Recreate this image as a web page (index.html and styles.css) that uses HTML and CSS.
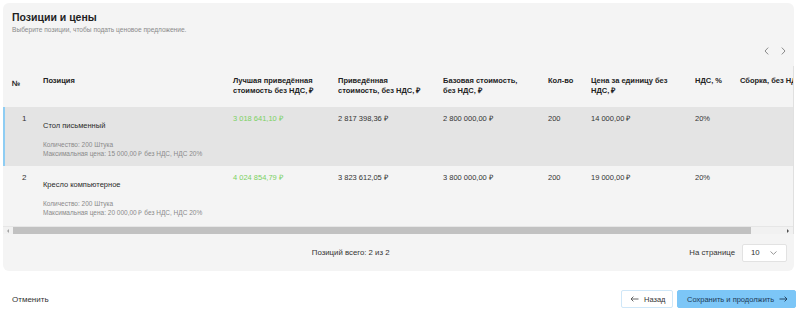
FILE: index.html
```html
<!DOCTYPE html>
<html lang="ru">

<head>
    <meta charset="UTF-8">
    <meta name="viewport" content="width=device-width, initial-scale=1.0">
    <title>Позиции и цены</title>
    <link rel="stylesheet" href="styles.css">
</head>

<body>
    <div class="card">
        <div class="card-head">
            <h2 class="title">Позиции и цены</h2>
            <p class="subtitle">Выберите позиции, чтобы подать ценовое предложение.</p>
        </div>
        <div class="nav-row">
            <button class="nav-btn" aria-label="Назад">
                <svg width="5" height="8" viewBox="0 0 5 8"><path d="M4.2 0.6 L1 4 L4.2 7.4" fill="none" stroke="#8a8a8a" stroke-width="1"/></svg>
            </button>
            <button class="nav-btn" aria-label="Вперёд">
                <svg width="5" height="8" viewBox="0 0 5 8"><path d="M0.8 0.6 L4 4 L0.8 7.4" fill="none" stroke="#8a8a8a" stroke-width="1"/></svg>
            </button>
        </div>
        <div class="table-wrap">
            <table class="positions">
                <colgroup>
                    <col style="width:31px">
                    <col style="width:190px">
                    <col style="width:105px">
                    <col style="width:105px">
                    <col style="width:105px">
                    <col style="width:43px">
                    <col style="width:104px">
                    <col style="width:45px">
                    <col style="width:120px">
                </colgroup>
                <thead>
                    <tr>
                        <th class="num-head">№</th>
                        <th>Позиция</th>
                        <th>Лучшая приведённая стоимость без НДС, ₽</th>
                        <th>Приведённая стоимость, без НДС, ₽</th>
                        <th>Базовая стоимость, без НДС, ₽</th>
                        <th class="nowrap">Кол-во</th>
                        <th>Цена за единицу без НДС, ₽</th>
                        <th class="nowrap">НДС, %</th>
                        <th class="nowrap">Сборка, без НДС, ₽</th>
                    </tr>
                </thead>
                <tbody>
                    <tr class="active">
                        <td class="num">1</td>
                        <td>
                            <div class="pos-name">Стол письменный</div>
                            <div class="pos-info">Количество: 200 Штука<br>Максимальная цена: 15 000,00 ₽ без НДС, НДС 20%</div>
                        </td>
                        <td class="best">3 018 641,10 ₽</td>
                        <td>2 817 398,36 ₽</td>
                        <td>2 800 000,00 ₽</td>
                        <td>200</td>
                        <td>14 000,00 ₽</td>
                        <td>20%</td>
                        <td></td>
                    </tr>
                    <tr>
                        <td class="num">2</td>
                        <td>
                            <div class="pos-name">Кресло компьютерное</div>
                            <div class="pos-info">Количество: 200 Штука<br>Максимальная цена: 20 000,00 ₽ без НДС, НДС 20%</div>
                        </td>
                        <td class="best">4 024 854,79 ₽</td>
                        <td>3 823 612,05 ₽</td>
                        <td>3 800 000,00 ₽</td>
                        <td>200</td>
                        <td>19 000,00 ₽</td>
                        <td>20%</td>
                        <td></td>
                    </tr>
                </tbody>
            </table>
            <div class="hscroll">
                <span class="sb-arrow left"></span>
                <span class="sb-thumb"></span>
                <span class="sb-track"></span>
                <span class="sb-arrow right"></span>
            </div>
        </div>
        <div class="card-foot">
            <div></div>
            <div class="total">Позиций всего: 2 из 2</div>
            <div class="per-page">
                <span>На странице</span>
                <div class="select">
                    <span>10</span>
                    <svg width="7" height="4" viewBox="0 0 7 4"><path d="M0.5 0.5 L3.5 3.3 L6.5 0.5" fill="none" stroke="#8a8a8a" stroke-width="0.9"/></svg>
                </div>
            </div>
        </div>
    </div>

    <div class="actions">
        <button class="link-btn">Отменить</button>
        <div class="actions-right">
            <button class="btn btn-back">
                <svg width="9" height="6" viewBox="0 0 9 6"><path d="M8.5 3 H1 M3.4 0.6 L1 3 L3.4 5.4" fill="none" stroke="#555" stroke-width="0.9"/></svg>
                Назад
            </button>
            <button class="btn btn-save">
                Сохранить и продолжить
                <svg width="9" height="6" viewBox="0 0 9 6"><path d="M0.5 3 H8 M5.6 0.6 L8 3 L5.6 5.4" fill="none" stroke="#1d3b57" stroke-width="0.9"/></svg>
            </button>
        </div>
    </div>
</body>

</html>
```

FILE: styles.css
```css
*{
    box-sizing: border-box;
}
body{
    margin:0;
    padding:3px;
    background:#fff;
    font-family:"Liberation Sans", Arial, sans-serif;
    color:#333;
}
button{
    font-family:inherit;
    cursor:pointer;
}
.card{
    width:791px;
    height:268px;
    background:#f4f4f4;
    border-radius:6px;
    overflow:hidden;
}
.card-head{
    padding:7px 9px 0;
}
.title{
    margin:0;
    font-size:10.5px;
    line-height:14px;
    font-weight:700;
    color:#1f1f1f;
}
.subtitle{
    margin:1px 0 0;
    font-size:6.6px;
    line-height:10px;
    color:#8a8a8a;
}
.nav-row{
    height:31px;
    display:flex;
    justify-content:flex-end;
    align-items:center;
    gap:5px;
    padding-right:5px;
}
.nav-btn{
    width:12px;
    height:12px;
    padding:0;
    border:none;
    background:none;
    display:flex;
    align-items:center;
    justify-content:center;
}
.table-wrap{
    overflow:hidden;
    border-right:1px solid #e0e0e0;
}
.positions{
    table-layout:fixed;
    width:848px;
    border-collapse:collapse;
    font-size:7.5px;
}
.positions th{
    text-align:left;
    vertical-align:top;
    font-size:7.5px;
    line-height:10px;
    font-weight:700;
    color:#222;
    padding:10px 8px 11px 9px;
}
.positions th.num-head{
    padding-top:13px;
}
.positions th.nowrap{
    white-space:nowrap;
    overflow:hidden;
}
.positions td{
    vertical-align:top;
    line-height:10px;
    padding:7px 9px 8px;
    color:#333;
}
.positions td.num{
    padding-left:19px;
    font-size:8px;
}
.positions tbody tr.active{
    background:#e4e4e4;
}
.positions tbody tr.active td:first-child{
    box-shadow:inset 2px 0 #8ecdf3;
}
.positions td.best{
    color:#7bd163;
}
.pos-name{
    margin-top:7px;
    font-size:7.5px;
    color:#2a2a2a;
}
.pos-info{
    margin-top:9px;
    font-size:6.5px;
    line-height:9px;
    color:#8a8a8a;
    white-space:nowrap;
}
.hscroll{
    display:flex;
    height:8px;
    margin-top:1px;
    background:#f1f1f1;
    border-top:1px solid #e6e6e6;
}
.sb-arrow{
    width:10px;
    display:flex;
    align-items:center;
    justify-content:center;
}
.sb-arrow.left::before{
    content:"";
    border-top:2px solid transparent;
    border-bottom:2px solid transparent;
    border-right:2px solid #a3a3a3;
}
.sb-arrow.right::before{
    content:"";
    border-top:2px solid transparent;
    border-bottom:2px solid transparent;
    border-left:2px solid #505050;
}
.sb-thumb{
    width:738px;
    background:#c1c1c1;
}
.sb-track{
    flex:1;
}
.card-foot{
    height:37px;
    display:flex;
    justify-content:space-between;
    align-items:center;
    padding:0 7px 0 9px;
    font-size:7.8px;
    color:#333;
}
.per-page{
    display:flex;
    align-items:center;
    gap:7px;
}
.select{
    width:45px;
    height:18px;
    background:#fff;
    border:1px solid #e2e2e2;
    border-radius:2px;
    display:flex;
    align-items:center;
    justify-content:space-between;
    padding:0 9px 0 8px;
}
.actions{
    margin-top:19px;
    display:flex;
    justify-content:space-between;
    align-items:center;
    padding:0 1px 0 9px;
}
.link-btn{
    border:none;
    background:none;
    padding:0;
    font-size:8px;
    color:#333;
}
.actions-right{
    display:flex;
    gap:4px;
}
.btn{
    height:18px;
    font-size:7.5px;
    border-radius:2px;
    display:flex;
    align-items:center;
    gap:5px;
}
.btn-back{
    width:52px;
    background:#fff;
    border:1px solid #cfe7f8;
    color:#333;
    padding:0 0 0 8px;
}
.btn-save{
    width:119px;
    background:#7cc6f7;
    border:1px solid #7cc6f7;
    color:#1d3b57;
    padding:0 0 0 9px;
}
```
